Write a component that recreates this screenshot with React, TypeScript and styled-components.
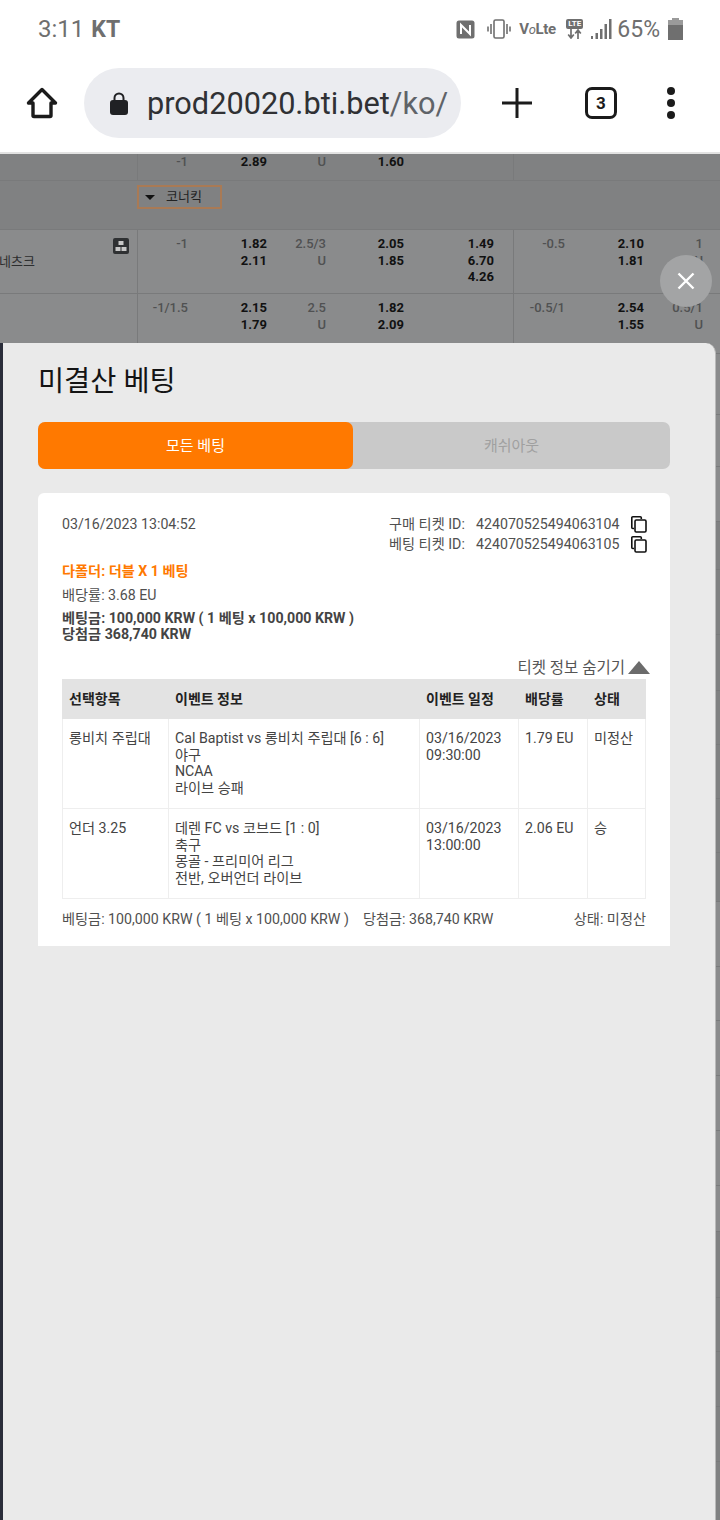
import React from "react";
import styled, { createGlobalStyle } from "styled-components";

const GlobalStyle = createGlobalStyle`
  html, body {
    margin: 0;
    padding: 0;
    background: #fff;
  }
  body {
    font-family: Roboto, "Noto Sans CJK KR", sans-serif;
  }
`;

const Page = styled.div`
  position: relative;
  width: 720px;
  height: 1520px;
  overflow: hidden;
`;

const StatusBar = styled.div`
  height: 58px;
  display: flex;
  align-items: center;
  justify-content: space-between;
  padding: 0 38px;
  color: #6f6f6f;
`;

const Clock = styled.div`
  font-size: 24px;
  display: flex;
  gap: 7px;
  align-items: baseline;
  b {
    font-size: 23px;
    font-weight: 700;
  }
`;

const StatusIcons = styled.div`
  display: flex;
  align-items: center;
  margin-right: -1px;
`;

const VolteText = styled.span`
  font-size: 15px;
  font-weight: 700;
  letter-spacing: -0.4px;
  width: 35px;
  margin: 0 12px 0 8px;
  white-space: nowrap;
  i {
    font-size: 13px;
    font-weight: 400;
  }
`;

const LteStack = styled.div`
  display: flex;
  flex-direction: column;
  align-items: center;
  width: 17px;
  margin-right: 8px;
  margin-top: -1px;
`;

const LteBadge = styled.span`
  background: #6f6f6f;
  color: #fff;
  font-size: 8px;
  font-weight: 700;
  line-height: 10px;
  width: 17px;
  text-align: center;
  border-radius: 2px;
`;

const Percent = styled.span`
  font-size: 23px;
  margin: 0 8px 0 5px;
`;

const Toolbar = styled.div`
  height: 96px;
  box-sizing: border-box;
  display: flex;
  align-items: center;
  border-bottom: 2px solid #e2e2e2;
  padding: 0 0 4px 26px;
`;

const Omnibox = styled.div`
  width: 377px;
  height: 70px;
  margin: 0 41px 0 26px;
  border-radius: 35px;
  background: #ebecf0;
  display: flex;
  align-items: center;
  padding-left: 26px;
  box-sizing: border-box;
  gap: 19px;
  font-size: 30.7px;
  color: #5f6368;
  white-space: nowrap;
  overflow: hidden;
  b {
    font-weight: 400;
    color: #303134;
  }
`;

const TabCount = styled.div`
  width: 32px;
  height: 32px;
  box-sizing: border-box;
  border: 3px solid #1b1b1b;
  border-radius: 7px;
  margin: 0 49px 0 53px;
  display: flex;
  align-items: center;
  justify-content: center;
  font-size: 17px;
  font-weight: 700;
  color: #1b1b1b;
`;

const Backdrop = styled.div`
  height: 1366px;
  display: flex;
  flex-direction: column;
`;

const BackRow = styled.div<{ $h: number; $dark?: boolean }>`
  height: ${(p) => p.$h}px;
  flex: none;
  box-sizing: border-box;
  background: ${(p) => (p.$dark ? "#808182" : "#8a8b8c")};
  border-bottom: 1px solid #797a7b;
  display: grid;
  grid-template-columns: 137px 376px 207px;
  overflow: hidden;
`;

const NameCell = styled.div`
  position: relative;
  font-size: 13px;
  color: #2c2d2e;
  padding-top: 24px;
  line-height: 16px;
  margin-left: -1px;
`;

const StatsIcon = styled.span`
  position: absolute;
  top: 8px;
  right: 8px;
  width: 16px;
  height: 16px;
  background: #2f3133;
  border-radius: 2px;
  display: flex;
  align-items: center;
  justify-content: center;
`;

const OddsBlock = styled.div<{ $cols: string; $end?: boolean }>`
  border-left: 1px solid #797a7b;
  display: grid;
  grid-template-columns: ${(p) => p.$cols};
  align-content: ${(p) => (p.$end ? "end" : "start")};
  padding: ${(p) => (p.$end ? "0 0 14px" : "6px 0 0")};
  font-size: 13px;
  line-height: 16.5px;
  color: #505152;
  box-sizing: border-box;
`;

const OddsCol = styled.div<{ $bold?: boolean }>`
  text-align: right;
  white-space: pre-line;
  font-weight: ${(p) => (p.$bold ? 700 : 500)};
  color: ${(p) => (p.$bold ? "#111" : "#505152")};
`;

const MAIN_COLS = "50px 79px 59px 78px 90px 19px";
const SIDE_COLS = "51px 79px 59px 17px";

const CornerCell = styled.div`
  grid-column: 2 / 4;
  padding-top: 4px;
`;

const CornerSelect = styled.div`
  width: 85px;
  height: 24px;
  box-sizing: border-box;
  border: 2px solid #a97a55;
  display: flex;
  align-items: center;
  gap: 11px;
  padding: 0 0 3px 6px;
  font-size: 13px;
  color: #222;
  &::before {
    content: "";
    margin-top: 4px;
    border-left: 5px solid transparent;
    border-right: 5px solid transparent;
    border-top: 5px solid #111;
  }
`;

const CloseButton = styled.div`
  position: absolute;
  left: 660px;
  top: 255px;
  width: 52px;
  height: 52px;
  border-radius: 50%;
  background: #a3a4a5;
  display: flex;
  align-items: center;
  justify-content: center;
`;

const Modal = styled.div`
  position: absolute;
  left: 0;
  top: 343px;
  bottom: 0;
  width: 716px;
  box-sizing: border-box;
  background: #eaeaea;
  border-left: 3px solid #2a2d3a;
  border-right: 1px solid #b9b9b9;
  border-top-right-radius: 10px;
  padding: 0 45px 0 35px;
`;

const ModalTitle = styled.h1`
  margin: 0;
  padding-top: 18px;
  font-size: 28.4px;
  line-height: 42px;
  font-weight: 400;
  color: #141414;
`;

const Tabs = styled.div`
  margin-top: 19px;
  height: 47px;
  display: grid;
  grid-template-columns: 315px 1fr;
  background: #c9c9c9;
  border-radius: 7px;
`;

const Tab = styled.div<{ $active?: boolean }>`
  display: flex;
  align-items: center;
  justify-content: center;
  border-radius: 7px;
  font-size: 15px;
  padding-bottom: 2px;
  background: ${(p) => (p.$active ? "#ff7900" : "transparent")};
  color: ${(p) => (p.$active ? "#fff" : "#a0a0a0")};
`;

const Card = styled.div`
  margin-top: 24px;
  height: 453px;
  box-sizing: border-box;
  background: #fff;
  border-radius: 6px 6px 0 0;
  padding: 21px 24px 0;
  color: #505050;
  font-size: 14.2px;
`;

const CardTop = styled.div`
  display: flex;
  justify-content: space-between;
  line-height: 20px;
  height: 40px;
  margin-right: -1px;
`;

const TicketRow = styled.div`
  display: flex;
  align-items: center;
  white-space: nowrap;
`;

const TicketLabel = styled.span`
  width: 87px;
`;

const TicketValue = styled.span`
  width: 155px;
`;

const OrangeLine = styled.div`
  margin-top: 7px;
  font-weight: 700;
  color: #ff7900;
  line-height: 20px;
`;

const OddsLine = styled.div`
  margin-top: 4px;
  line-height: 20px;
`;

const BoldBlock = styled.div`
  margin-top: 5px;
  font-weight: 700;
  color: #444;
  line-height: 16px;
`;

const HideToggle = styled.div`
  margin: 13px -4px 2px 0;
  height: 22px;
  display: flex;
  justify-content: flex-end;
  align-items: center;
  gap: 3px;
  color: #555;
  font-size: 15.5px;
  &::after {
    content: "";
    margin-top: 2px;
    border-left: 11px solid transparent;
    border-right: 11px solid transparent;
    border-bottom: 13px solid #6b6b6b;
  }
`;

const TableRow = styled.div<{ $head?: boolean }>`
  display: grid;
  grid-template-columns: 107px 251px 99px 69px 58px;
  height: ${(p) => (p.$head ? 40 : 90)}px;
  box-sizing: border-box;
  background: ${(p) => (p.$head ? "#e3e3e3" : "#fff")};
  border-bottom: ${(p) => (p.$head ? "none" : "1px solid #eeeeee")};
  font-size: 14px;
  font-weight: ${(p) => (p.$head ? 700 : 400)};
  color: ${(p) => (p.$head ? "#222" : "#444")};
`;

const TableCell = styled.div<{ $head?: boolean }>`
  padding: ${(p) => (p.$head ? "11px 6px 0" : "11px 6px 0")};
  line-height: ${(p) => (p.$head ? "18px" : "16.5px")};
  font-size: ${(p) => (p.$head ? "14px" : "14.2px")};
  border-right: 1px solid ${(p) => (p.$head ? "#e3e3e3" : "#eeeeee")};
  white-space: pre-line;
  &:first-child {
    border-left: 1px solid ${(p) => (p.$head ? "#e3e3e3" : "#eeeeee")};
  }
`;

const CardFooter = styled.div`
  margin-top: 10px;
  display: flex;
  line-height: 20px;
  white-space: nowrap;
  gap: 14px;
  span:last-child {
    margin-left: auto;
  }
`;

function CopyIcon() {
  return (
    <svg width="16" height="17" viewBox="0 0 16 17" fill="none" stroke="#111" strokeWidth="1.6">
      <path d="M3 12.500H1.800a1 1 0 0 1-1-1V1.800a1 1 0 0 1 1-1h7.500a1 1 0 0 1 1 1V3" />
      <rect x="4" y="4" width="11" height="12" rx="1.2" fill="#fff" />
    </svg>
  );
}

const HEAD = ["선택항목", "이벤트 정보", "이벤트 일정", "배당률", "상태"];

const ROWS = [
  [
    "롱비치 주립대",
    "Cal Baptist vs 롱비치 주립대 [6 : 6]\n야구\nNCAA\n라이브 승패",
    "03/16/2023\n09:30:00",
    "1.79 EU",
    "미정산",
  ],
  [
    "언더 3.25",
    "데렌 FC vs 코브드 [1 : 0]\n축구\n몽골 - 프리미어 리그\n전반, 오버언더 라이브",
    "03/16/2023\n13:00:00",
    "2.06 EU",
    "승",
  ],
];

// rows behind the modal, only the right edge of them shows
const LOWER_ROWS: [number, boolean][] = [
  [61, false],
  [52, false],
  [55, false],
  [48, true],
  [65, true],
  [56, true],
  [54, true],
  [54, true],
  [54, true],
  [49, true],
  [65, false],
  [54, false],
  [55, false],
  [55, false],
  [55, false],
  [46, false],
  [66, true],
  [54, true],
  [55, true],
  [55, true],
  [69, true],
];

export default function App() {
  return (
    <Page>
      <GlobalStyle />
      <StatusBar>
        <Clock>
          3:11 <b>KT</b>
        </Clock>
        <StatusIcons>
          <svg width="19" height="19" viewBox="0 0 19 19">
            <rect x="0.5" y="0.5" width="18" height="18" rx="2.5" fill="#6f6f6f" />
            <path d="M5 14V5l9 9V5" fill="none" stroke="#fff" strokeWidth="2" />
          </svg>
          <svg width="24" height="20" viewBox="0 0 24 20" style={{ marginLeft: 12 }} fill="none" stroke="#6f6f6f" strokeWidth="1.6">
            <rect x="7" y="1" width="10" height="18" rx="1.5" />
            <path d="M4 5v10M1 7.500v5M20 5v10M23 7.500v5" />
          </svg>
          <VolteText>
            V<i>o</i>Lte
          </VolteText>
          <LteStack>
            <LteBadge>LTE</LteBadge>
            <svg width="15" height="10" viewBox="0 0 15 10" fill="none" stroke="#6f6f6f" strokeWidth="1.7">
              <path d="M4 0v8M1.200 5.500 4 9l2.800-3.500M11 10V2M8.200 4.500 11 1l2.800 3.500" />
            </svg>
          </LteStack>
          <svg width="21" height="20" viewBox="0 0 21 20" fill="#6f6f6f">
            <rect x="0" y="17" width="2" height="3" />
            <rect x="4.500" y="14" width="2.500" height="6" />
            <rect x="9" y="10" width="2.500" height="10" />
            <rect x="13.500" y="5" width="2.500" height="15" />
            <rect x="18" y="0" width="2.500" height="20" />
          </svg>
          <Percent>65%</Percent>
          <svg width="15" height="22" viewBox="0 0 15 22" fill="#6f6f6f">
            <rect x="4" y="0" width="7" height="3" fill="#9a9a9a" />
            <rect x="0" y="2" width="15" height="5" fill="#9a9a9a" />
            <rect x="0" y="7" width="15" height="15" />
          </svg>
        </StatusIcons>
      </StatusBar>
      <Toolbar>
        <svg width="32" height="32" viewBox="0 0 32 32" fill="none" stroke="#1b1b1b" strokeWidth="3.4" strokeLinejoin="round">
          <path d="M16 2.500 2.500 16H7v12.500a1 1 0 0 0 1 1h16a1 1 0 0 0 1-1V16h4.500z" />
        </svg>
        <Omnibox>
          <svg width="18" height="23" viewBox="0 0 18 23" style={{ flex: "none" }}>
            <path d="M4.500 9V6a4.500 4.500 0 0 1 9 0V9" fill="none" stroke="#202124" strokeWidth="2" />
            <rect x="0" y="8" width="18" height="15" rx="3" fill="#202124" />
          </svg>
          <span>
            <b>prod20020.bti.bet</b>/ko/
          </span>
        </Omnibox>
        <svg width="30" height="30" viewBox="0 0 30 30" stroke="#1b1b1b" strokeWidth="3">
          <path d="M0 15h30M15 0v30" />
        </svg>
        <TabCount>3</TabCount>
        <svg width="10" height="32" viewBox="0 0 10 32" fill="#1b1b1b">
          <circle cx="5" cy="4" r="4" />
          <circle cx="5" cy="16" r="4" />
          <circle cx="5" cy="28" r="4" />
        </svg>
      </Toolbar>
      <Backdrop>
        <BackRow $h={27} $dark>
          <div />
          <OddsBlock $cols={MAIN_COLS} $end>
            <OddsCol>-1</OddsCol>
            <OddsCol $bold>2.89</OddsCol>
            <OddsCol>U</OddsCol>
            <OddsCol $bold>1.60</OddsCol>
          </OddsBlock>
          <OddsBlock $cols={SIDE_COLS} />
        </BackRow>
        <BackRow $h={49} $dark>
          <div />
          <CornerCell>
            <CornerSelect>코너킥</CornerSelect>
          </CornerCell>
        </BackRow>
        <BackRow $h={64}>
          <NameCell>
            네츠크
            <StatsIcon>
              <svg width="12" height="12" viewBox="0 0 12 12" fill="#c8c8c8">
                <rect x="3.500" y="1" width="5" height="4" />
                <rect x="0.500" y="7" width="5" height="4" />
                <rect x="6.500" y="7" width="5" height="4" />
              </svg>
            </StatsIcon>
          </NameCell>
          <OddsBlock $cols={MAIN_COLS}>
            <OddsCol>-1</OddsCol>
            <OddsCol $bold>{"1.82\n2.11"}</OddsCol>
            <OddsCol>{"2.5/3\nU"}</OddsCol>
            <OddsCol $bold>{"2.05\n1.85"}</OddsCol>
            <OddsCol $bold>{"1.49\n6.70\n4.26"}</OddsCol>
          </OddsBlock>
          <OddsBlock $cols={SIDE_COLS}>
            <OddsCol>-0.5</OddsCol>
            <OddsCol $bold>{"2.10\n1.81"}</OddsCol>
            <OddsCol>{"1\nU"}</OddsCol>
          </OddsBlock>
        </BackRow>
        <BackRow $h={60}>
          <div />
          <OddsBlock $cols={MAIN_COLS}>
            <OddsCol>-1/1.5</OddsCol>
            <OddsCol $bold>{"2.15\n1.79"}</OddsCol>
            <OddsCol>{"2.5\nU"}</OddsCol>
            <OddsCol $bold>{"1.82\n2.09"}</OddsCol>
          </OddsBlock>
          <OddsBlock $cols={SIDE_COLS}>
            <OddsCol>-0.5/1</OddsCol>
            <OddsCol $bold>{"2.54\n1.55"}</OddsCol>
            <OddsCol>{"0.5/1\nU"}</OddsCol>
          </OddsBlock>
        </BackRow>
        {LOWER_ROWS.map(([h, dark], i) => (
          <BackRow key={i} $h={h} $dark={dark} />
        ))}
      </Backdrop>
      <CloseButton>
        <svg width="18" height="18" viewBox="0 0 18 18" stroke="#fff" strokeWidth="2.4">
          <path d="M1.500 1.500l15 15M16.500 1.500l-15 15" />
        </svg>
      </CloseButton>
      <Modal>
        <ModalTitle>미결산 베팅</ModalTitle>
        <Tabs>
          <Tab $active>모든 베팅</Tab>
          <Tab>캐쉬아웃</Tab>
        </Tabs>
        <Card>
          <CardTop>
            <span>03/16/2023 13:04:52</span>
            <div>
              <TicketRow>
                <TicketLabel>구매 티켓 ID:</TicketLabel>
                <TicketValue>424070525494063104</TicketValue>
                <CopyIcon />
              </TicketRow>
              <TicketRow>
                <TicketLabel>베팅 티켓 ID:</TicketLabel>
                <TicketValue>424070525494063105</TicketValue>
                <CopyIcon />
              </TicketRow>
            </div>
          </CardTop>
          <OrangeLine>다폴더: 더블 X 1 베팅</OrangeLine>
          <OddsLine>배당률: 3.68 EU</OddsLine>
          <BoldBlock>
            베팅금: 100,000 KRW ( 1 베팅 x 100,000 KRW )
            <br />
            당첨금 368,740 KRW
          </BoldBlock>
          <HideToggle>티켓 정보 숨기기</HideToggle>
          <TableRow $head>
            {HEAD.map((h) => (
              <TableCell key={h} $head>
                {h}
              </TableCell>
            ))}
          </TableRow>
          {ROWS.map((row) => (
            <TableRow key={row[0]}>
              {row.map((c, i) => (
                <TableCell key={i}>{c}</TableCell>
              ))}
            </TableRow>
          ))}
          <CardFooter>
            <span>베팅금: 100,000 KRW ( 1 베팅 x 100,000 KRW )</span>
            <span>당첨금: 368,740 KRW</span>
            <span>상태: 미정산</span>
          </CardFooter>
        </Card>
      </Modal>
    </Page>
  );
}
